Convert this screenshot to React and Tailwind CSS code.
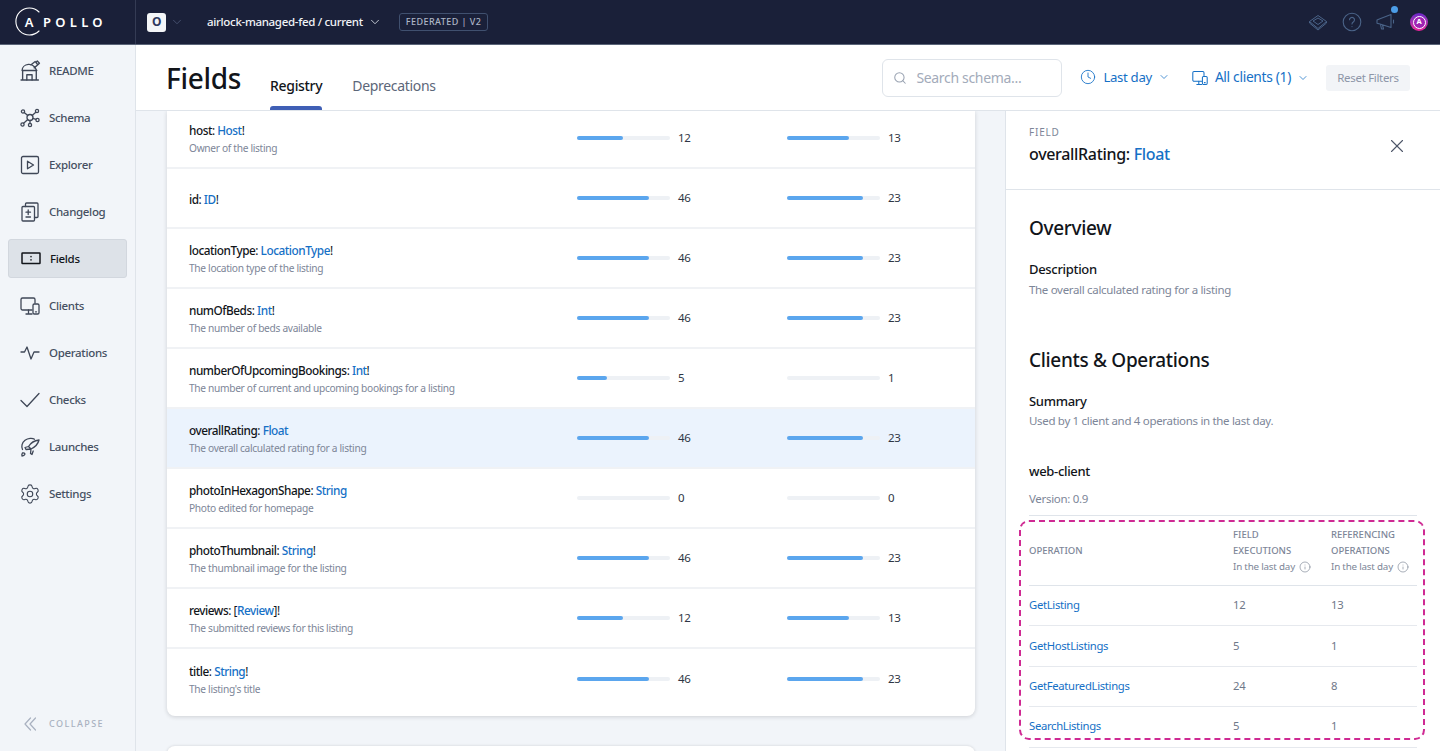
import React from 'react';
import { ChevronDown, Search, Clock, X, Info, Settings } from 'lucide-react';

const navIconProps = { fill: 'none', stroke: 'currentColor', strokeWidth: 1.3, strokeLinecap: 'round', strokeLinejoin: 'round', viewBox: '0 0 20 20', className: 'w-[20px] h-[20px]' };

const ReadmeIcon = () => (
    <svg {...navIconProps} className="w-[21px] h-[21px]">
        <path d="M1 19h16.500M2.500 19v-9h13v9M2 10c0-3 2.500-5.500 6-5.800 2.500-.2 4.500.8 6 2.500l2 3.300" />
        <path d="M6.500 19v-5h5v5M10.500 4.500l4-3 2.500 3-3.500 3M15.500 2l1-1 2 2-1 1" />
    </svg>
);
const SchemaIcon = () => (
    <svg {...navIconProps}>
        <circle cx="10" cy="9.500" r="3" />
        <circle cx="3" cy="3.500" r="1.600" /><circle cx="17" cy="3" r="1.600" /><circle cx="17.500" cy="12" r="1.600" />
        <circle cx="2.500" cy="16.500" r="1.600" /><circle cx="10" cy="17" r="1.600" />
        <path d="M4.200 4.600l3.600 3M15.800 4.200l-3.700 3.300M12.900 10.300l3 1.100M7.800 11.500l-4.200 3.800M10 12.500v3" />
    </svg>
);
const ExplorerIcon = () => (
    <svg {...navIconProps}>
        <rect x="1.500" y="1.500" width="17" height="17" rx="1.500" />
        <path d="M7.500 6.200v7.600l6-3.800z" />
    </svg>
);
const ChangelogIcon = () => (
    <svg {...navIconProps}>
        <rect x="2" y="4.500" width="12.500" height="14.500" rx="1" />
        <path d="M5.500 4.500V2a1 1 0 0 1 1-1h10.500a1 1 0 0 1 1 1v12.500a1 1 0 0 1-1 1h-2.500" />
        <path d="M8.200 8v4.500M6 10.200h4.500M6 15h4.500" />
    </svg>
);
const FieldsIcon = () => (
    <svg {...navIconProps} strokeWidth={1.500}>
        <rect x="1" y="4" width="18" height="10.500" rx=".5" />
        <path d="M10 7.500v.3M10 10.700v.3" />
    </svg>
);
const ClientsIcon = ({ className = 'w-[20px] h-[20px]' }) => (
    <svg {...navIconProps} className={className}>
        <path d="M12 14H2.500A1.500 1.500 0 0 1 1 12.500v-9A1.500 1.500 0 0 1 2.500 2h11A1.500 1.500 0 0 1 15 3.500V7" />
        <path d="M6 18h6M8.500 14v4" />
        <rect x="13" y="8" width="6" height="10" rx="1.300" />
        <path d="M15.500 15.800h1" />
    </svg>
);
const OperationsIcon = () => (
    <svg {...navIconProps}>
        <path d="M1 9h3.500l2.500-5 4 12 3-7h5" />
    </svg>
);
const ChecksIcon = () => (
    <svg {...navIconProps}>
        <path d="M1 10.500l6 6L19 3.500" />
    </svg>
);
const LaunchIcon = () => (
    <svg {...navIconProps}>
        <path d="M14.500 2.200C12.500 .800 8 1 5 3.200 2 5.500 1 9.500 2.500 12.500M2 19c1.500 0 2.500-.7 3-2-.5-1-1.500-1.200-2.500-1-.8 1-.8 2-.5 3z" />
        <path d="M19 3c-4.500.5-8 2.500-10.500 6.500l2.500 2.500C15 10 18 7.500 19 3zM8.500 9.500l-3.500 1 1 2 5-.500M11 12l-.500 4.500 1.500 1 1.200-3.500" />
    </svg>
);

const navItems = [
    { label: 'README', icon: <ReadmeIcon /> },
    { label: 'Schema', icon: <SchemaIcon /> },
    { label: 'Explorer', icon: <ExplorerIcon /> },
    { label: 'Changelog', icon: <ChangelogIcon /> },
    { label: 'Fields', icon: <FieldsIcon />, active: true },
    { label: 'Clients', icon: <ClientsIcon /> },
    { label: 'Operations', icon: <OperationsIcon /> },
    { label: 'Checks', icon: <ChecksIcon /> },
    { label: 'Launches', icon: <LaunchIcon /> },
    { label: 'Settings', icon: <Settings className="w-[22px] h-[22px] -ml-[1px]" strokeWidth={1.200} /> },
];

const rows = [
    { name: 'host', pre: '', type: 'Host', post: '!', desc: 'Owner of the listing', a: 12, b: 13, ab: 46, bb: 62, h: 'h-[58px] pb-[2px]' },
    { name: 'id', pre: '', type: 'ID', post: '!', desc: '', a: 46, b: 23, ab: 72, bb: 76 },
    { name: 'locationType', pre: '', type: 'LocationType', post: '!', desc: 'The location type of the listing', a: 46, b: 23, ab: 72, bb: 76 },
    { name: 'numOfBeds', pre: '', type: 'Int', post: '!', desc: 'The number of beds available', a: 46, b: 23, ab: 72, bb: 76 },
    { name: 'numberOfUpcomingBookings', pre: '', type: 'Int', post: '!', desc: 'The number of current and upcoming bookings for a listing', a: 5, b: 1, ab: 30, bb: 0 },
    { name: 'overallRating', pre: '', type: 'Float', post: '', desc: 'The overall calculated rating for a listing', a: 46, b: 23, ab: 72, bb: 76, selected: true },
    { name: 'photoInHexagonShape', pre: '', type: 'String', post: '', desc: 'Photo edited for homepage', a: 0, b: 0, ab: 0, bb: 0 },
    { name: 'photoThumbnail', pre: '', type: 'String', post: '!', desc: 'The thumbnail image for the listing', a: 46, b: 23, ab: 72, bb: 76 },
    { name: 'reviews', pre: '[', type: 'Review', post: ']!', desc: 'The submitted reviews for this listing', a: 12, b: 13, ab: 46, bb: 62 },
    { name: 'title', pre: '', type: 'String', post: '!', desc: "The listing's title", a: 46, b: 23, ab: 72, bb: 76, h: 'h-[67px] pb-[7px]' },
];

const operations = [
    { name: 'GetListing', a: 12, b: 13 },
    { name: 'GetHostListings', a: 5, b: 1 },
    { name: 'GetFeaturedListings', a: 24, b: 8 },
    { name: 'SearchListings', a: 5, b: 1 },
];

function Bar({ value, fill }) {
    return (
        <div className="flex items-center">
            <div className="w-[93px] h-[4px] rounded-full bg-[#eef1f5]">
                <div className="h-full rounded-full bg-[#5ba6ee]" style={{ width: fill }} />
            </div>
            <span className="ml-[8px] text-[11.500px] text-[#2f3645]">{value}</span>
        </div>
    );
}

function FieldRow({ row }) {
    return (
        <div className={`flex items-center border-b-2 border-[#f0f2f5] last:border-b-0 pl-[22px] ${row.h || 'h-[60px]'} ${row.selected ? 'bg-[#ebf3fd]' : ''}`}>
            <div className="w-[388px] pt-[1px]">
                <div className="text-[11.800px] leading-[18px] tracking-[-0.04em] text-[#12151a]">
                    <span className="font-medium">{row.name}</span>: {row.pre}<span className="text-[#1570c6] font-medium">{row.type}</span>{row.post}
                </div>
                {row.desc && <div className="mt-[1px] text-[10.200px] leading-[16px] text-[#7d8698]">{row.desc}</div>}
            </div>
            <div className="w-[210px]"><Bar value={row.a} fill={row.ab} /></div>
            <Bar value={row.b} fill={row.bb} />
        </div>
    );
}

export default function App() {
    return (
        <div className="h-[751px] w-[1440px] overflow-hidden flex flex-col bg-white font-['Noto_Sans',sans-serif] tracking-[-0.02em]">
            <header className="h-[45px] shrink-0 flex items-center bg-[#1a2039] border-b border-[#5a6478] text-white">
                <div className="w-[136px] h-full shrink-0 border-r border-[#343b54] flex items-center pl-[15px]">
                    <div className="relative w-[28px] h-[30px] flex items-center justify-center">
                        <svg viewBox="0 0 30 30" className="absolute left-0 top-0 w-[30px] h-[30px]" fill="none" stroke="white" strokeWidth="1.100" strokeLinecap="round">
                            <path d="M24 5A13.500 13.500 0 1 0 24 24" />
                        </svg>
                        <span className="text-[13px] font-semibold leading-none">A</span>
                    </div>
                    <span className="text-[13px] font-semibold tracking-[0.33em] leading-none">POLLO</span>
                </div>
                <div className="ml-[11px] w-[19px] h-[19px] rounded-[3px] bg-[#f4f6f8] text-[#2f3a5f] text-[12px] font-bold flex items-center justify-center">O</div>
                <ChevronDown className="ml-[4px] w-[14px] h-[14px] text-[#4a5573]" strokeWidth={1.500} />
                <span className="ml-[23px] text-[11.500px] font-medium text-[#f1f3f7]">airlock-managed-fed / current</span>
                <ChevronDown className="ml-[5px] w-[14px] h-[14px] text-[#d6dbe5]" strokeWidth={1.500} />
                <div className="ml-[17px] h-[18px] px-[6px] rounded-[3px] border border-[#40506f] flex items-center text-[9px] font-medium tracking-[0.05em] text-[#aeb6c6]">FEDERATED | V2</div>
                <div className="ml-auto mr-[12px] flex items-center text-[#4a6388]">
                    <svg viewBox="0 0 20 20" className="w-[20px] h-[20px]" fill="none" stroke="currentColor" strokeWidth="1" strokeLinejoin="round">
                        <path d="M10 3.500l8.500 6L10 16.500l-8.500-7zM5 9l5-3 5 3-5 3.500zM1.500 9.500v1.500L10 18l8.500-7V9.500" />
                    </svg>
                    <svg viewBox="0 0 20 20" className="ml-[14px] w-[20px] h-[20px]" fill="none" stroke="currentColor" strokeWidth="1.100" strokeLinecap="round">
                        <circle cx="10" cy="10" r="8.800" />
                        <path d="M7.500 7.800a2.500 2.500 0 1 1 3.800 2.200c-.8.500-1.300 1-1.300 2M10 14.500v.1" />
                    </svg>
                    <div className="relative ml-[14px] w-[20px] h-[20px]">
                        <svg viewBox="0 0 20 20" className="w-[20px] h-[20px]" fill="none" stroke="currentColor" strokeWidth="1.100" strokeLinejoin="round" strokeLinecap="round">
                            <path d="M1 8l3-1.200 11-4.300v13l-11-3.500-3-.8zM4.500 12.300l1 4.700h2l-1-4M17.500 8v3" />
                        </svg>
                        <span className="absolute -top-[6px] right-[-2px] w-[7px] h-[7px] rounded-full bg-[#4c9de8]" />
                    </div>
                    <div className="ml-[14px] w-[18px] h-[18px] rounded-full bg-gradient-to-b from-[#6a22c9] to-[#ec1f98] flex items-center justify-center">
                        <div className="w-[13px] h-[13px] rounded-full border border-white bg-[#a024b4] text-white text-[7.500px] font-bold leading-none flex items-center justify-center">A</div>
                    </div>
                </div>
            </header>
            <div className="flex-1 min-h-0 flex">
                <aside className="w-[136px] shrink-0 bg-[#f2f5f9] border-r border-[#dfe4ea] flex flex-col">
                    <nav className="pt-[6px] px-[8px]">
                        {navItems.map((item) => (
                            <div key={item.label} className={`h-[39px] mb-[8px] rounded-[3px] flex items-center text-[11.500px] font-medium ${item.active ? 'bg-[#dde2e8] border border-[#d2d7de] text-[#12151a]' : 'text-[#465062]'}`}>
                                <span className={`w-[41px] pl-[12px] flex items-center shrink-0 ${item.active ? 'text-[#12151a]' : 'text-[#3f4757]'}`}>{item.icon}</span>
                                {item.label}
                            </div>
                        ))}
                    </nav>
                    <div className="mt-auto mb-[20px] pl-[24px] flex items-center text-[#a9b1c0]">
                        <svg viewBox="0 0 12 14" className="w-[12px] h-[14px]" fill="none" stroke="currentColor" strokeWidth="1.200" strokeLinecap="round" strokeLinejoin="round">
                            <path d="M6.500 1L1 7l5.500 6M11.500 1L6 7l5.500 6" />
                        </svg>
                        <span className="ml-[13px] text-[9px] font-medium tracking-[0.16em]">COLLAPSE</span>
                    </div>
                </aside>
                <main className="flex-1 min-w-0 flex flex-col">
                    <div className="h-[66px] shrink-0 border-b border-[#dfe4ea] flex items-center pl-[30px] pr-[30px]">
                        <h1 className="text-[28px] font-medium text-[#12151a] leading-none">Fields</h1>
                        <div className="ml-[29px] self-end relative h-[50px] flex items-center text-[14px] font-medium text-[#12151a]">
                            Registry
                            <span className="absolute bottom-0 left-0 right-0 h-[4px] rounded-t-[3px] bg-[#3f5fb5]" />
                        </div>
                        <div className="ml-[30px] self-end h-[50px] flex items-center text-[14px] text-[#5c6679]">Deprecations</div>
                        <div className="ml-auto flex items-center">
                            <div className="w-[180px] h-[38px] rounded-[6px] border border-[#dfe4ea] flex items-center pl-[10px] text-[14px] text-[#a3abba]">
                                <Search className="w-[14px] h-[14px] text-[#9aa3b2]" strokeWidth={1.800} />
                                <span className="ml-[9px]">Search schema...</span>
                            </div>
                            <div className="ml-[18px] flex items-center text-[13.200px] text-[#1570c6]">
                                <Clock className="w-[16px] h-[16px]" strokeWidth={1.300} />
                                <span className="ml-[7px]">Last day</span>
                                <ChevronDown className="ml-[6px] w-[12px] h-[12px]" strokeWidth={1.500} />
                            </div>
                            <div className="ml-[22px] flex items-center text-[13.800px] text-[#1570c6]">
                                <ClientsIcon className="w-[16px] h-[16px]" />
                                <span className="ml-[7px]">All clients (1)</span>
                                <ChevronDown className="ml-[6px] w-[12px] h-[12px]" strokeWidth={1.500} />
                            </div>
                            <div className="ml-[17px] w-[84px] h-[26px] rounded-[3px] bg-[#f2f4f7] flex items-center justify-center text-[11.500px] text-[#8d96a8]">Reset Filters</div>
                        </div>
                    </div>
                    <div className="flex-1 min-h-0 flex overflow-hidden">
                        <div className="w-[870px] shrink-0 bg-[#f2f5f9] border-r border-[#dfe4ea] pl-[31px] pr-[30px]">
                            <div className="w-[808px] rounded-b-[8px] bg-white shadow-[0_1px_4px_rgba(18,21,26,0.16)]">
                                {rows.map((row) => <FieldRow key={row.name} row={row} />)}
                            </div>
                            <div className="mt-[30px] h-[40px] w-[808px] rounded-t-[8px] bg-white shadow-[0_0_3px_rgba(18,21,26,0.16)]" />
                        </div>
                        <section className="flex-1 min-w-0 overflow-hidden">
                            <div className="h-[79px] border-b border-[#dfe4ea] pl-[23px] pr-[32px] flex items-center justify-between">
                                <div className="mt-[-6px]">
                                    <div className="text-[10px] leading-[14px] tracking-[0.08em] text-[#7d8698] mt-[-4px]">FIELD</div>
                                    <div className="text-[16px] leading-[22px] font-medium text-[#12151a] mt-[4px]">overallRating: <span className="text-[#1570c6]">Float</span></div>
                                </div>
                                <X className="w-[22px] h-[22px] text-[#4d5668] mt-[-8px]" strokeWidth={1.200} />
                            </div>
                            <div className="pl-[23px] pr-[23px]">
                                <h2 className="mt-[24px] text-[19px] leading-[28px] font-medium text-[#12151a]">Overview</h2>
                                <div className="mt-[17px] text-[13px] leading-[20px] font-medium text-[#12151a]">Description</div>
                                <p className="mt-[2px] text-[11.500px] leading-[18px] text-[#7d8698]">The overall calculated rating for a listing</p>
                                <h2 className="mt-[47px] text-[19px] leading-[28px] font-medium text-[#12151a]">Clients &amp; Operations</h2>
                                <div className="mt-[17px] text-[13px] leading-[20px] font-medium text-[#12151a]">Summary</div>
                                <p className="mt-[1px] text-[11.500px] leading-[18px] text-[#7d8698]">Used by 1 client and 4 operations in the last day.</p>
                                <div className="mt-[31px] text-[13px] leading-[20px] font-medium text-[#12151a]">web-client</div>
                                <p className="mt-[9px] text-[11.500px] leading-[18px] text-[#7d8698]">Version: 0.9</p>
                                <div className="relative mt-[7px]">
                                    <div className="h-[71px] border-y border-[#dfe4ea] flex items-center text-[9.500px] font-medium tracking-normal leading-[16px] text-[#7d8698]">
                                        <div className="w-[204px]">OPERATION</div>
                                        <div className="w-[98px]">FIELD<br />EXECUTIONS<br />
                                            <span className="flex items-center font-normal whitespace-nowrap tracking-[-0.02em] text-[9.800px]">In the last day<Info className="ml-[4px] w-[12px] h-[12px] text-[#6f7889]" strokeWidth={1.200} /></span>
                                        </div>
                                        <div>REFERENCING<br />OPERATIONS<br />
                                            <span className="flex items-center font-normal whitespace-nowrap tracking-[-0.02em] text-[9.800px]">In the last day<Info className="ml-[4px] w-[12px] h-[12px] text-[#6f7889]" strokeWidth={1.200} /></span>
                                        </div>
                                    </div>
                                    {operations.map((op) => (
                                        <div key={op.name} className="h-[40.400px] border-b border-[#e6e9ee] flex items-center text-[11.300px] text-[#6f7889]">
                                            <div className="w-[204px] text-[#1570c6]">{op.name}</div>
                                            <div className="w-[98px]">{op.a}</div>
                                            <div>{op.b}</div>
                                        </div>
                                    ))}
                                    <div className="absolute left-[-10px] right-[-8px] top-[5px] h-[220px] rounded-[10px] border-2 border-dashed border-[#cf2a93]" />
                                </div>
                            </div>
                        </section>
                    </div>
                </main>
            </div>
        </div>
    );
}
